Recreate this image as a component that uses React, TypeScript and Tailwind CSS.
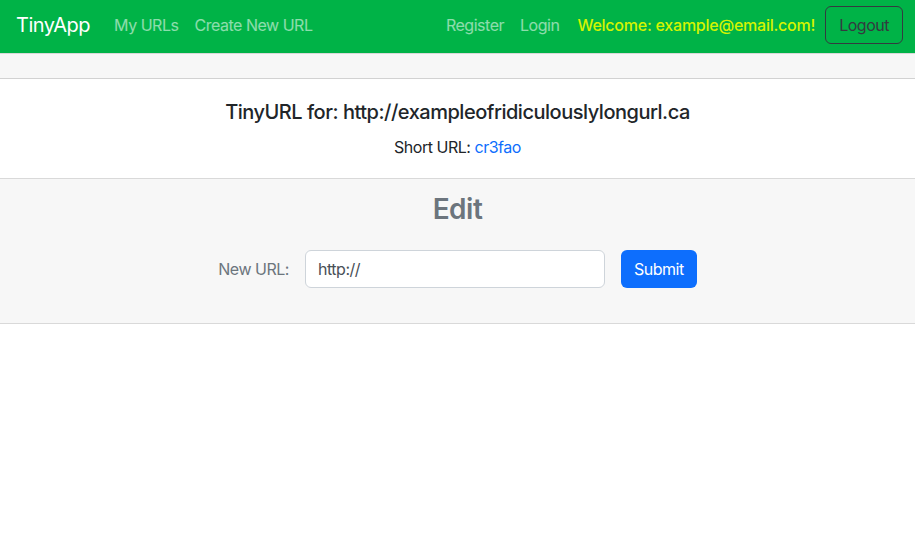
import React from 'react';

const font = { fontFamily: 'Inter, "Liberation Sans", Arial, sans-serif' };

const NavLink: React.FC<{ children: React.ReactNode }> = ({ children }) => (
  <a href="#" className="px-2 text-base text-white/55 hover:text-white/75">
    {children}
  </a>
);

export default function App() {
  return (
    <div className="min-h-screen bg-white text-[#212529] tracking-[-0.03em]" style={font}>
      <nav className="flex h-[53px] items-center bg-[#00b347] pb-[4px] pl-4 pr-3">
        <a href="#" className="mr-4 text-xl text-white">TinyApp</a>
        <div className="flex items-center">
          <NavLink>My URLs</NavLink>
          <NavLink>Create New URL</NavLink>
        </div>
        <div className="ml-auto flex items-center">
          <NavLink>Register</NavLink>
          <NavLink>Login</NavLink>
          <span className="ml-[10px] mr-[10px] text-base font-medium tracking-[-0.015em] text-[#d4f500]">Welcome: example@email.com!</span>
          <button className="h-[38px] rounded-md border border-[#343a40] px-[13px] text-base text-[#343a40]">
            Logout
          </button>
        </div>
      </nav>

      <div className="border-y border-black/15">
        <div className="h-[25px] border-b border-black/15 bg-[#f7f7f7]" />
        <div className="flex h-[100px] flex-col items-center border-b border-black/15 pt-[21px]">
          <h5 className="text-xl font-medium leading-6">TinyURL for: http://exampleofridiculouslylongurl.ca</h5>
          <p className="mt-[11px] text-base leading-6">
            Short URL: <a href="#" className="text-[#0d6efd]">cr3fao</a>
          </p>
        </div>
        <div className="flex h-[144px] flex-col items-center bg-[#f7f7f7] pt-[11px]">
          <h2 className="text-[28px] font-semibold leading-[38px] text-[#6c757d]">Edit</h2>
          <form className="mt-[22px] flex items-center" onSubmit={e => e.preventDefault()}>
            <label className="mr-4 text-base text-[#6c757d]">New URL:</label>
            <input
              type="text"
              defaultValue="http://"
              className="h-[38px] w-[300px] rounded-md border border-[#ced4da] bg-white px-3 text-base tracking-[-0.03em] text-[#495057] outline-none"
            />
            <button type="submit" className="ml-4 h-[38px] rounded-md bg-[#0d6efd] px-[13px] text-base text-white">
              Submit
            </button>
          </form>
        </div>
      </div>
    </div>
  );
}
